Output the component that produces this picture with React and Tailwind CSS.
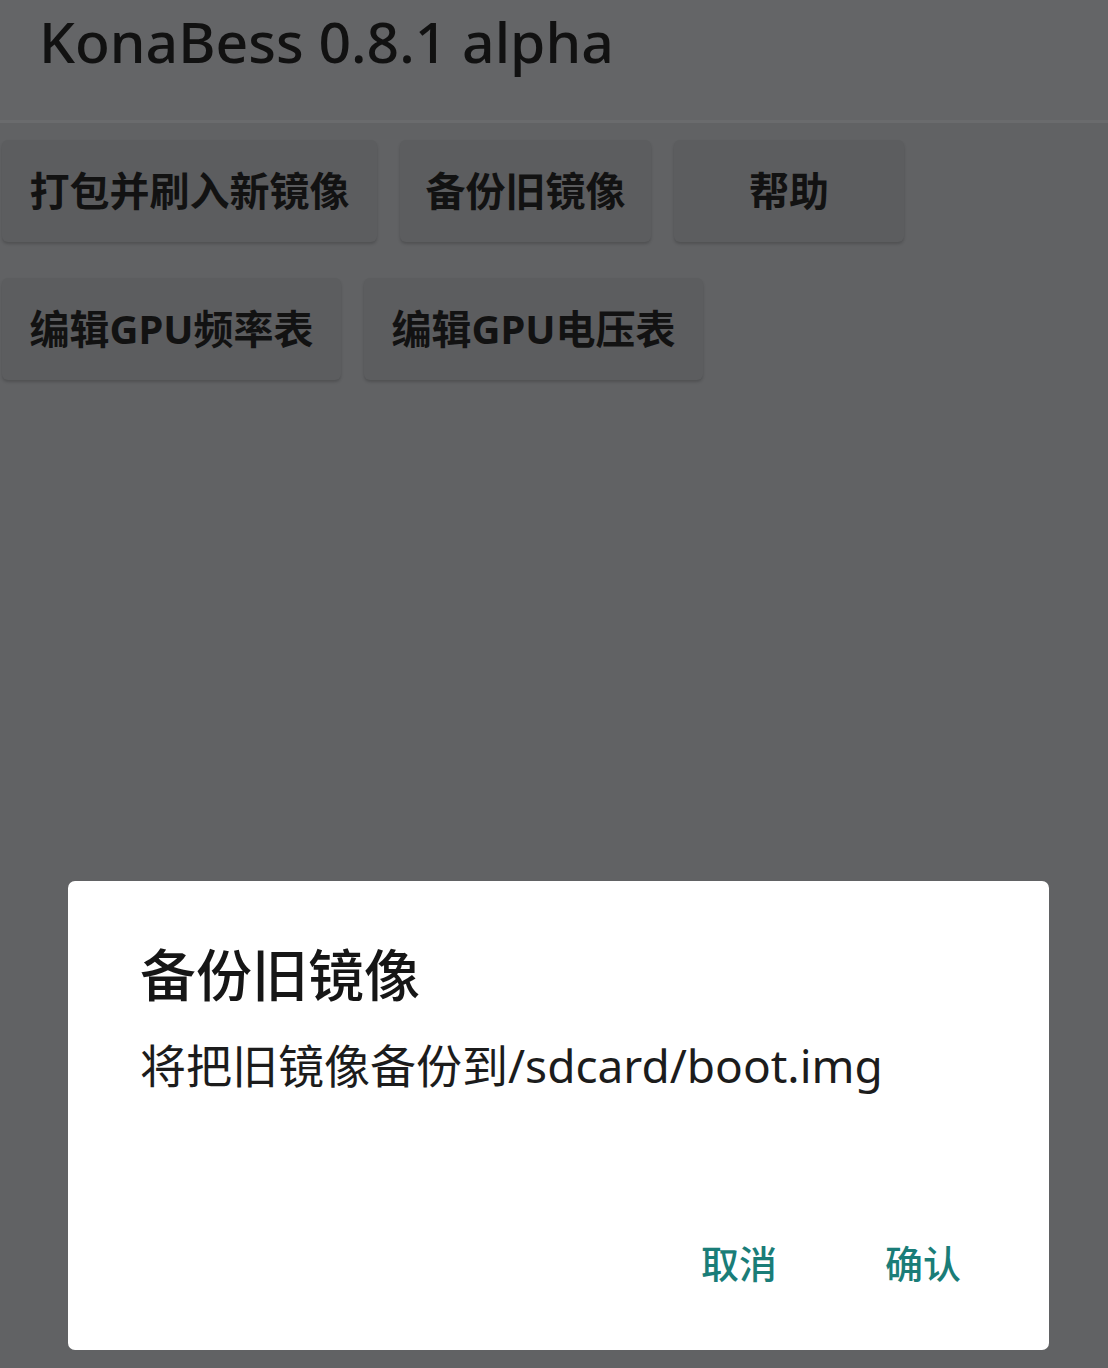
import React from "react";

const font = { fontFamily: '"Noto Sans", "Noto Sans CJK SC", sans-serif' };

function Btn({ children, className = "" }) {
  return (
    <div
      className={
        "h-[102px] flex items-center justify-center px-[27px] rounded-[6px] bg-[#5c5d5f] shadow-[0_2px_3px_rgba(0,0,0,0.18)] text-[40px] font-bold text-[#121212] whitespace-nowrap " +
        className
      }
    >
      {children}
    </div>
  );
}

export default function App() {
  return (
    <div
      className="relative w-[1108px] h-[1368px] overflow-hidden bg-[#616264]"
      style={font}
    >
      <div className="h-[120px] bg-[#646567] flex items-start pl-[39px]">
        <span className="text-[57px] leading-[82px] text-[#111111] font-medium">
          KonaBess 0.8.1 alpha
        </span>
      </div>
      <div className="h-[3px] bg-[#6a6b6d]" />
      <div className="flex flex-col gap-[36px] pt-[17px] pl-[2px]">
        <div className="flex gap-[23px]">
          <Btn className="w-[375px]">打包并刷入新镜像</Btn>
          <Btn className="w-[251px]">备份旧镜像</Btn>
          <Btn className="w-[230px]">帮助</Btn>
        </div>
        <div className="flex gap-[23px]">
          <Btn className="w-[339px]">编辑GPU频率表</Btn>
          <Btn className="w-[339px]">编辑GPU电压表</Btn>
        </div>
      </div>

      <div className="absolute inset-0 flex items-end pb-[18px] pl-[68px]">
        <div className="w-[981px] h-[469px] bg-white rounded-[7px] flex flex-col pl-[72px] pr-[88px]">
          <div className="pt-[58px] text-[56px] leading-[70px] font-medium text-[#161616]">
            备份旧镜像
          </div>
          <div className="mt-[28px] text-[46px] leading-[56px] text-[#1c1c1c]">
            将把旧镜像备份到/sdcard/boot.img
          </div>
          <div className="flex-1" />
          <div className="flex justify-end gap-[108px] pb-[62px] text-[38px] leading-[50px] font-medium text-[#1a7d78]">
            <span>取消</span>
            <span>确认</span>
          </div>
        </div>
      </div>
    </div>
  );
}
